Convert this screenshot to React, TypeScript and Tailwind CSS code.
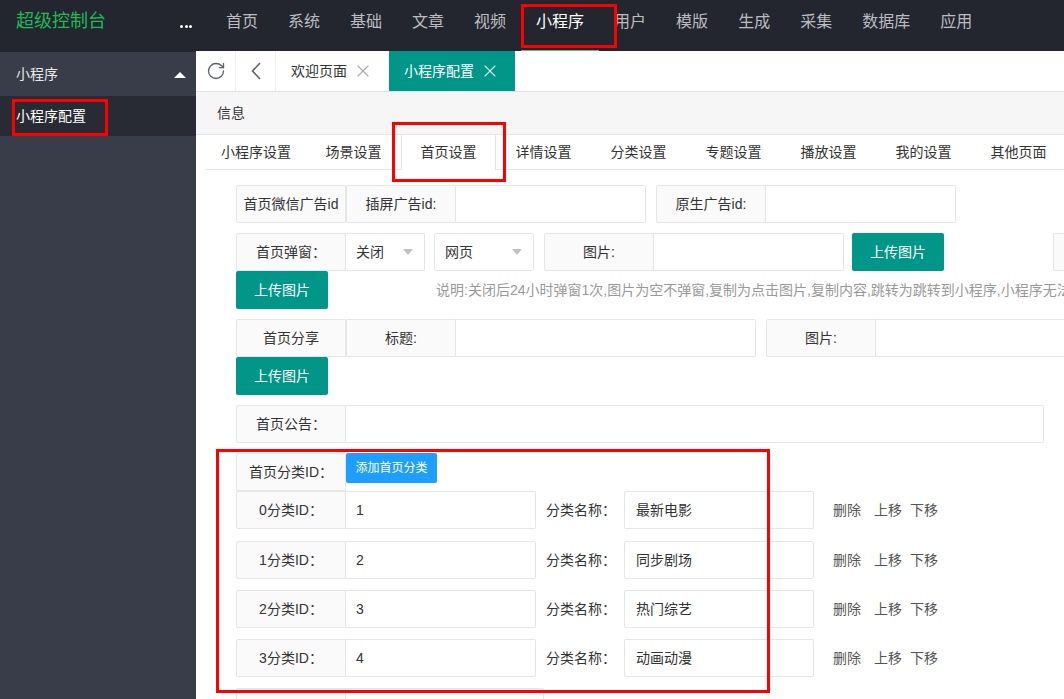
import React from 'react';
import { RotateCw, X } from 'lucide-react';

const NAV_ITEMS = ['首页', '系统', '基础', '文章', '视频', '小程序', '用户', '模版', '生成', '采集', '数据库', '应用'];
const SETTING_TABS = ['小程序设置', '场景设置', '首页设置', '详情设置', '分类设置', '专题设置', '播放设置', '我的设置', '其他页面'];
const CATEGORIES = [
  { id: '1', name: '最新电影' },
  { id: '2', name: '同步剧场' },
  { id: '3', name: '热门综艺' },
  { id: '4', name: '动画动漫' },
];

const Label: React.FC<{ children?: React.ReactNode }> = ({ children }) => (
  <div className="flex h-[38px] w-[110px] shrink-0 items-center justify-center whitespace-nowrap rounded-l-[2px] border border-[#e6e6e6] bg-[#fafafa] text-[14px] text-[#333]">
    {children}
  </div>
);

const UploadBtn = () => (
  <div className="flex h-[38px] w-[92px] shrink-0 items-center justify-center rounded-[2px] bg-[#009688] text-[14px] text-white">
    上传图片
  </div>
);

const Select: React.FC<{ value: string; className: string }> = ({ value, className }) => (
  <div className={`flex h-[38px] shrink-0 items-center justify-between bg-white pl-[10px] pr-[11px] text-[14px] text-[#333] ${className}`}>
    <span>{value}</span>
    {/* dropdown caret */}
    <span className="h-0 w-0 border-x-[5px] border-t-[6px] border-x-transparent border-t-[#c2c2c2]" />
  </div>
);

const App: React.FC = () => {
  return (
    <div className="relative flex h-[699px] w-[1064px] flex-col overflow-hidden bg-white font-['Liberation_Sans','Noto_Sans_CJK_SC',sans-serif] text-[14px] text-[#333]">
      {/* TOP HEADER */}
      <header className="flex h-[51px] shrink-0 items-start bg-[#23262e]">
        <div className="flex h-[43px] w-[180px] shrink-0 items-center pl-[16px] text-[18px] text-[#21b958]">超级控制台</div>
        <div className="mt-[5px] flex h-[43px] shrink-0 items-center gap-[1.5px]">
          <span className="h-[3px] w-[3px] rounded-full bg-white" />
          <span className="h-[3px] w-[3px] rounded-full bg-white" />
          <span className="h-[3px] w-[3px] rounded-full bg-white" />
        </div>
        <nav className="ml-[19px] flex h-[51px]">
          {NAV_ITEMS.map((item) => {
            const active = item === '小程序';
            return (
              <div
                key={item}
                className={`relative flex h-[51px] shrink-0 items-center whitespace-nowrap px-[15px] pb-[8px] text-[16px] ${
                  active ? 'text-white' : 'text-[#bcbdc0]'
                }`}
              >
                {item}
                {active && <span className="absolute bottom-0 left-0 right-0 h-[1px] bg-[#5fb878]" />}
              </div>
            );
          })}
        </nav>
      </header>

      <div className="flex min-h-0 flex-1">
        {/* SIDEBAR */}
        <aside className="w-[196px] shrink-0 border-t border-[#23262e] bg-[#393d49]">
          <div className="flex h-[44px] items-center justify-between pl-[16px] pr-[10px] text-[14px] text-[#e8e8e8]">
            <span>小程序</span>
            <span className="mt-[2px] h-0 w-0 border-x-[6px] border-b-[6px] border-x-transparent border-b-white" />
          </div>
          <div className="flex h-[40px] items-center bg-[#282b33] pl-[16px] text-[14px] text-white">小程序配置</div>
        </aside>

        {/* MAIN */}
        <main className="flex min-w-0 flex-1 flex-col overflow-hidden">
          {/* page tabs */}
          <div className="flex h-[41px] shrink-0 border-b border-[#e2e2e2] bg-white">
            <div className="flex w-[40px] shrink-0 items-center justify-center border-r border-[#eee]">
              <RotateCw size={20} strokeWidth={1.6} color="#5f6368" />
            </div>
            <div className="flex w-[40px] shrink-0 items-center justify-center border-r border-[#eee]">
              <svg width="10" height="18" viewBox="0 0 10 18" fill="none">
                <polyline points="9,1 1.5,9 9,17" stroke="#5f6368" strokeWidth="1.6" />
              </svg>
            </div>
            <div className="flex shrink-0 items-center pl-[15px] pr-[16px] text-[#333]">
              <span>欢迎页面</span>
              <X size={20} strokeWidth={1.3} color="#aaa" className="ml-[6px]" />
            </div>
            <div className="flex shrink-0 items-center bg-[#009688] pl-[15px] pr-[15px] text-white">
              <span>小程序配置</span>
              <X size={20} strokeWidth={1.3} color="#cfe9e6" className="ml-[6px]" />
            </div>
          </div>

          {/* info band */}
          <div className="flex h-[43px] shrink-0 items-center border-b border-[#e6e6e6] bg-[#f6f6f6] pl-[21px] text-[#333]">信息</div>

          {/* setting tabs */}
          <div className="ml-[10px] flex h-[35px] shrink-0 border-b border-[#e6e6e6]">
            {SETTING_TABS.map((t, i) => {
              const active = t === '首页设置';
              return (
                <div
                  key={t}
                  className={`flex shrink-0 items-center justify-center whitespace-nowrap text-[14px] text-[#333] ${
                    i === 0 ? 'w-[100px]' : 'w-[95px]'
                  } ${active ? 'h-[35px] border-x border-[#e6e6e6] bg-white' : 'h-[34px]'}`}
                >
                  {t}
                </div>
              );
            })}
          </div>

          {/* form */}
          <div className="flex flex-col pl-[40px] pr-[20px] pt-[15px]">
            {/* ad ids */}
            <div className="flex">
              <Label>首页微信广告id</Label>
              <Label>插屏广告id:</Label>
              <div className="h-[38px] w-[190px] shrink-0 rounded-r-[2px] border border-l-0 border-[#e6e6e6]" />
              <div className="ml-[10px] flex">
                <Label>原生广告id:</Label>
                <div className="h-[38px] w-[190px] shrink-0 rounded-r-[2px] border border-l-0 border-[#e6e6e6]" />
              </div>
            </div>

            {/* popup */}
            <div className="mt-[10px] flex">
              <Label>首页弹窗：</Label>
              <Select value="关闭" className="w-[79px] rounded-r-[2px] border border-l-0 border-[#e6e6e6]" />
              <Select value="网页" className="ml-[9px] w-[100px] rounded-[2px] border border-[#e6e6e6]" />
              <div className="ml-[10px] flex">
                <Label>图片:</Label>
                <div className="h-[38px] w-[190px] shrink-0 rounded-r-[2px] border border-l-0 border-[#e6e6e6]" />
              </div>
              <div className="ml-[8px]">
                <UploadBtn />
              </div>
              <div className="ml-[109px]">
                <Label />
              </div>
            </div>
            <div className="flex items-center">
              <UploadBtn />
              <span className="ml-[108px] shrink-0 whitespace-nowrap text-[14px] text-[#999]">
                说明:关闭后24小时弹窗1次,图片为空不弹窗,复制为点击图片,复制内容,跳转为跳转到小程序,小程序无法
              </span>
            </div>

            {/* share */}
            <div className="mt-[10px] flex">
              <Label>首页分享</Label>
              <Label>标题:</Label>
              <div className="h-[38px] w-[300px] shrink-0 rounded-r-[2px] border border-l-0 border-[#e6e6e6]" />
              <div className="ml-[10px] flex">
                <Label>图片:</Label>
                <div className="h-[38px] w-[300px] shrink-0 rounded-r-[2px] border border-l-0 border-[#e6e6e6]" />
              </div>
            </div>
            <div className="flex">
              <UploadBtn />
            </div>

            {/* notice */}
            <div className="mt-[10px] flex">
              <Label>首页公告：</Label>
              <div className="h-[38px] flex-1 rounded-r-[2px] border border-l-0 border-[#e6e6e6]" />
            </div>

            {/* categories */}
            <div className="mt-[10px] flex items-start">
              <Label>首页分类ID：</Label>
              <div className="flex h-[30px] w-[91px] shrink-0 items-center justify-center rounded-[2px] bg-[#1e9fff] text-[12px] text-white">
                添加首页分类
              </div>
            </div>
            {CATEGORIES.map((c, i) => (
              <div
                key={c.id}
                className={`flex items-center ${i === 0 ? 'mt-0' : i === 1 ? 'mt-[12px]' : 'mt-[11px]'}`}
              >
                <Label>{i}分类ID：</Label>
                <div className="flex h-[38px] w-[190px] shrink-0 items-center rounded-r-[2px] border border-l-0 border-[#e6e6e6] pl-[10px] text-[#333]">
                  {c.id}
                </div>
                <div className="w-[88px] shrink-0 whitespace-nowrap pl-[10px] text-[#333]">分类名称：</div>
                <div className="flex h-[38px] w-[190px] shrink-0 items-center rounded-[2px] border border-[#e6e6e6] pl-[11px] text-[#333]">
                  {c.name}
                </div>
                <div className="ml-[19px] flex shrink-0 text-[#555]">
                  <span>删除</span>
                  <span className="ml-[13px]">上移</span>
                  <span className="ml-[8px]">下移</span>
                </div>
              </div>
            ))}
            <div className="mt-[11px] flex">
              <Label />
              <div className="h-[38px] w-[198px] shrink-0 rounded-r-[2px] border border-l-0 border-[#e6e6e6]" />
            </div>
          </div>
        </main>
      </div>

      {/* red annotation boxes drawn over the screenshot */}
      <div className="pointer-events-none absolute left-[521px] top-[4px] h-[44px] w-[96px] border-[3px] border-[#ff0000]" />
      <div className="pointer-events-none absolute left-[12px] top-[99px] h-[37px] w-[96px] border-[3px] border-[#ff0000]" />
      <div className="pointer-events-none absolute left-[392px] top-[122px] h-[60px] w-[114px] border-[3px] border-[#ff0000]" />
      <div className="pointer-events-none absolute left-[216px] top-[449px] h-[244px] w-[554px] border-[3px] border-[#ff0000]" />
    </div>
  );
};

export default App;
